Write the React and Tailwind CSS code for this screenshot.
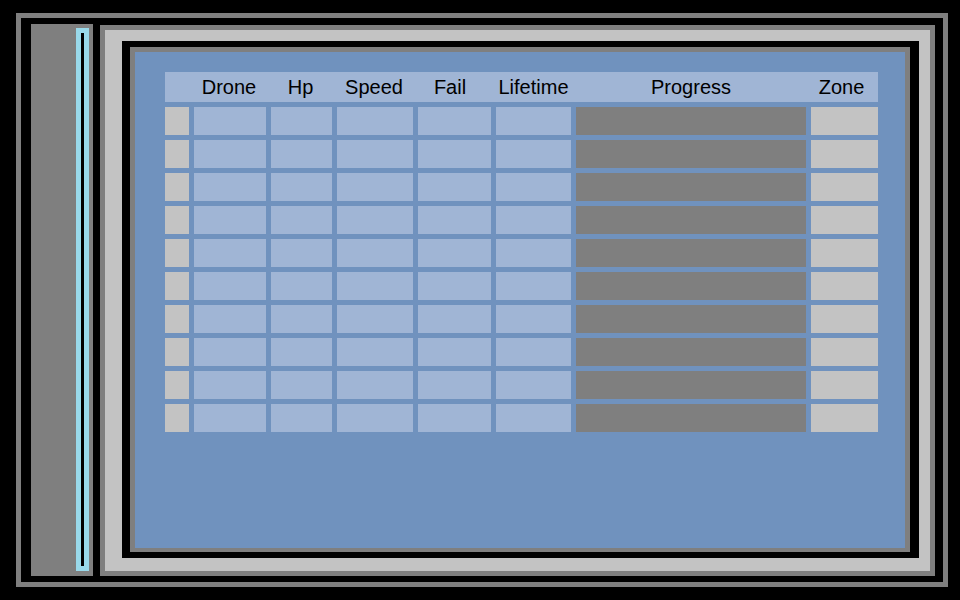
/**
 * App.jsx — drone overview frame with status table.
 */
const COLS = [
  { label: '', pad: '' },
  { label: 'Drone', pad: 'pr-[2px]' },
  { label: 'Hp', pad: 'pr-[2px]' },
  { label: 'Speed', pad: 'pr-[2px]' },
  { label: 'Fail', pad: 'pr-[9px]' },
  { label: 'Lifetime', pad: '' },
  { label: 'Progress', pad: '' },
  { label: 'Zone', pad: 'pr-[6px]' },
];
const GRID = 'grid grid-cols-[24px_72px_61px_76px_73px_75px_230px_67px] gap-x-[5px]';

const CELL_BG = [
  'bg-[#c3c3c3]',
  'bg-[#a0b5d5]',
  'bg-[#a0b5d5]',
  'bg-[#a0b5d5]',
  'bg-[#a0b5d5]',
  'bg-[#a0b5d5]',
  'bg-[#7f7f7f]',
  'bg-[#c3c3c3]',
];

const ROWS = Array.from({ length: 10 }, (_, i) => i);

function DroneTable() {
  return (
    <div className="w-[713px]">
      <div className={`${GRID} h-[30px] bg-[#a0b5d5] items-center`}>
        {COLS.map((c, i) => (
          <div key={i} className={`text-center text-[20px] leading-none text-black whitespace-nowrap ${c.pad}`}>
            {c.label}
          </div>
        ))}
      </div>

      <div className="mt-[5px] flex flex-col gap-y-[5px]">
        {ROWS.map((r) => (
          <div key={r} className={GRID}>
            {CELL_BG.map((bg, i) => (
              <div key={i} className={`h-[28px] ${bg}`} />
            ))}
          </div>
        ))}
      </div>
    </div>
  );
}

export default function App() {
  return (
    <div
      className="w-[960px] h-[600px] bg-black pl-[16px] pt-[13px] overflow-hidden"
      style={{ fontFamily: '"Liberation Sans", Arial, sans-serif' }}
    >
      {/* outer frame */}
      <div className="w-[932px] h-[574px] border-[5px] border-[#7f7f7f] bg-black flex gap-[7px] pl-[10px] pt-[6px] pr-[8px] pb-[6px]">
        {/* sidebar */}
        <div className="w-[62px] shrink-0 bg-[#7f7f7f] flex justify-end pt-[4px] pr-[4px] pb-[5px]">
          <div className="w-[13px] h-full border-[5px] border-[#99d9ea] bg-black" />
        </div>

        {/* main panel */}
        <div className="flex-1 mt-[1px] border-[5px] border-[#7f7f7f] bg-[#c3c3c3] pl-[17px] pt-[11px] pr-[11px] pb-[13px] flex">
          <div className="flex-1 bg-black pl-[8px] pt-[6px] pr-[9px] pb-[6px] flex">
            <div className="flex-1 border-[#7f7f7f] border-l-[5px] border-t-[5px] border-r-[5px] border-b-[4px] bg-[#7092be] pl-[30px] pt-[20px]">
              <DroneTable />
            </div>
          </div>
        </div>
      </div>
    </div>
  );
}
